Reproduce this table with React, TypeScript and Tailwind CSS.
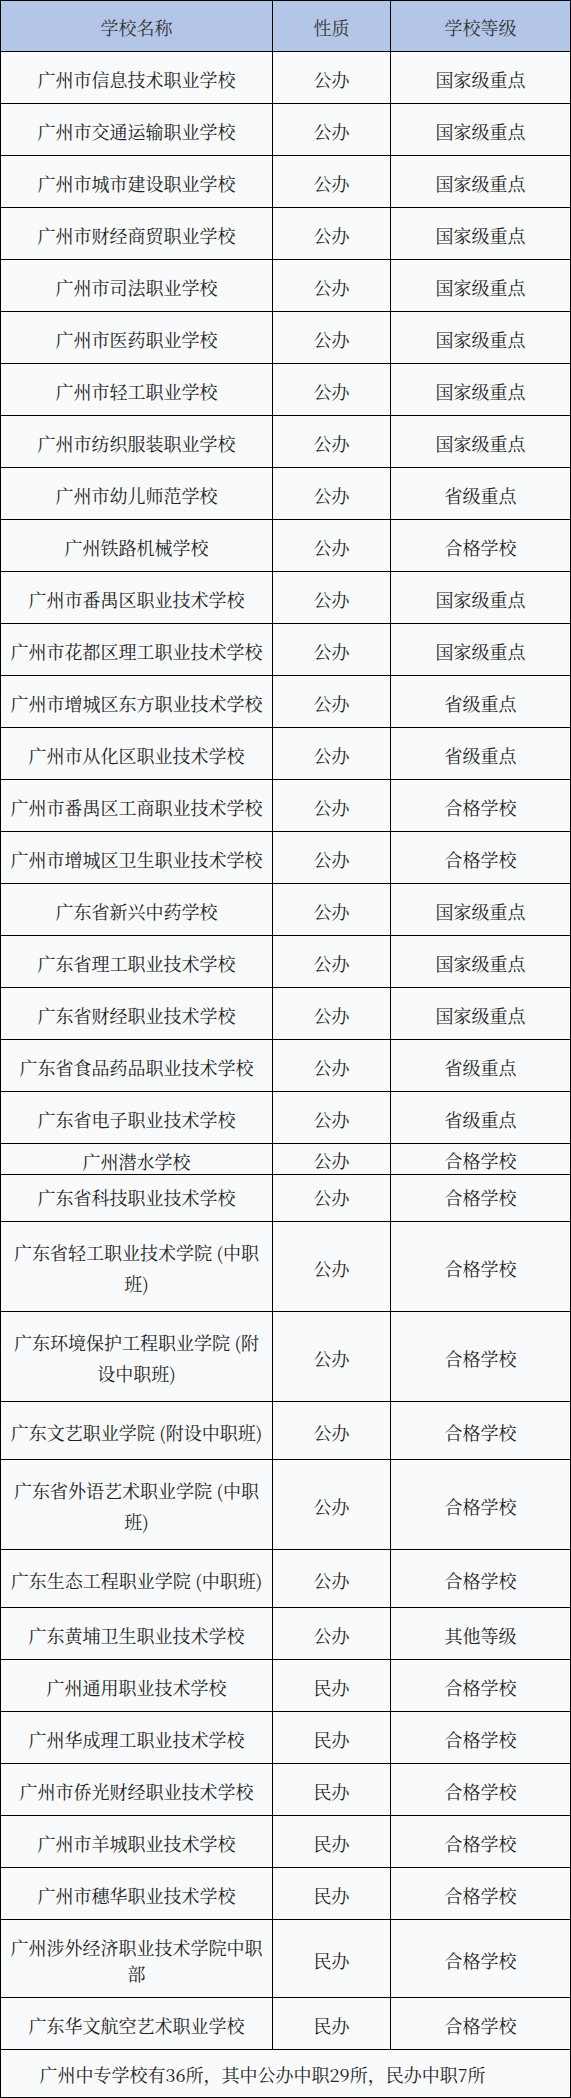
import React from "react";

type Row = { name: string[]; type: string; level: string; h: string; lead?: string };

const rows: Row[] = [
  { name: ["广州市信息技术职业学校"], type: "公办", level: "国家级重点", h: "h-[52px]" },
  { name: ["广州市交通运输职业学校"], type: "公办", level: "国家级重点", h: "h-[52px]" },
  { name: ["广州市城市建设职业学校"], type: "公办", level: "国家级重点", h: "h-[52px]" },
  { name: ["广州市财经商贸职业学校"], type: "公办", level: "国家级重点", h: "h-[52px]" },
  { name: ["广州市司法职业学校"], type: "公办", level: "国家级重点", h: "h-[52px]" },
  { name: ["广州市医药职业学校"], type: "公办", level: "国家级重点", h: "h-[52px]" },
  { name: ["广州市轻工职业学校"], type: "公办", level: "国家级重点", h: "h-[52px]" },
  { name: ["广州市纺织服装职业学校"], type: "公办", level: "国家级重点", h: "h-[52px]" },
  { name: ["广州市幼儿师范学校"], type: "公办", level: "省级重点", h: "h-[52px]" },
  { name: ["广州铁路机械学校"], type: "公办", level: "合格学校", h: "h-[52px]" },
  { name: ["广州市番禺区职业技术学校"], type: "公办", level: "国家级重点", h: "h-[52px]" },
  { name: ["广州市花都区理工职业技术学校"], type: "公办", level: "国家级重点", h: "h-[52px]" },
  { name: ["广州市增城区东方职业技术学校"], type: "公办", level: "省级重点", h: "h-[52px]" },
  { name: ["广州市从化区职业技术学校"], type: "公办", level: "省级重点", h: "h-[52px]" },
  { name: ["广州市番禺区工商职业技术学校"], type: "公办", level: "合格学校", h: "h-[52px]" },
  { name: ["广州市增城区卫生职业技术学校"], type: "公办", level: "合格学校", h: "h-[52px]" },
  { name: ["广东省新兴中药学校"], type: "公办", level: "国家级重点", h: "h-[52px]" },
  { name: ["广东省理工职业技术学校"], type: "公办", level: "国家级重点", h: "h-[52px]" },
  { name: ["广东省财经职业技术学校"], type: "公办", level: "国家级重点", h: "h-[52px]" },
  { name: ["广东省食品药品职业技术学校"], type: "公办", level: "省级重点", h: "h-[52px]" },
  { name: ["广东省电子职业技术学校"], type: "公办", level: "省级重点", h: "h-[52px]" },
  { name: ["广州潜水学校"], type: "公办", level: "合格学校", h: "h-[26px]" },
  { name: ["广东省科技职业技术学校"], type: "公办", level: "合格学校", h: "h-[52px]" },
  { name: ["广东省轻工职业技术学院 (中职", "班)"], type: "公办", level: "合格学校", h: "h-[90px]", lead: "leading-[31px]" },
  { name: ["广东环境保护工程职业学院 (附", "设中职班)"], type: "公办", level: "合格学校", h: "h-[90px]", lead: "leading-[31px]" },
  { name: ["广东文艺职业学院 (附设中职班)"], type: "公办", level: "合格学校", h: "h-[58px]" },
  { name: ["广东省外语艺术职业学院 (中职", "班)"], type: "公办", level: "合格学校", h: "h-[90px]", lead: "leading-[31px]" },
  { name: ["广东生态工程职业学院 (中职班)"], type: "公办", level: "合格学校", h: "h-[58px]" },
  { name: ["广东黄埔卫生职业技术学校"], type: "公办", level: "其他等级", h: "h-[52px]" },
  { name: ["广州通用职业技术学校"], type: "民办", level: "合格学校", h: "h-[52px]" },
  { name: ["广州华成理工职业技术学校"], type: "民办", level: "合格学校", h: "h-[52px]" },
  { name: ["广州市侨光财经职业技术学校"], type: "民办", level: "合格学校", h: "h-[52px]" },
  { name: ["广州市羊城职业技术学校"], type: "民办", level: "合格学校", h: "h-[52px]" },
  { name: ["广州市穗华职业技术学校"], type: "民办", level: "合格学校", h: "h-[52px]" },
  { name: ["广州涉外经济职业技术学院中职", "部"], type: "民办", level: "合格学校", h: "h-[78px]", lead: "leading-[26px]" },
  { name: ["广东华文航空艺术职业学校"], type: "民办", level: "合格学校", h: "h-[52px]" },
];

const font = {
  fontFamily: '"Noto Serif CJK SC", "Liberation Sans", "Noto Sans CJK SC", sans-serif',
};

export default function App() {
  return (
    <div className="w-[571px] bg-white text-[18px] text-[#222]" style={font}>
      <div className="border-l border-t border-black">
        <div className="grid grid-cols-[272px_118px_180px] h-[51px] bg-[#b4c6e7] text-[#333]">
          <div className="border-r border-b border-black flex items-center justify-center pt-[3px]">学校名称</div>
          <div className="border-r border-b border-black flex items-center justify-center pt-[3px]">性质</div>
          <div className="border-r border-b border-black flex items-center justify-center pt-[3px]">学校等级</div>
        </div>
        {rows.map((r, i) => (
          <div key={i} className={`grid grid-cols-[272px_118px_180px] bg-[#f9fafc] ${r.h}`}>
            <div className={`border-r border-b border-black flex flex-col items-center justify-center text-center pt-[3px] ${r.lead ?? "leading-[26px]"}`}>
              {r.name.map((l, j) => (
                <span key={j} className="whitespace-nowrap">{l}</span>
              ))}
            </div>
            <div className="border-r border-b border-black flex items-center justify-center pt-[3px]">{r.type}</div>
            <div className="border-r border-b border-black flex items-center justify-center pt-[3px]">{r.level}</div>
          </div>
        ))}
        <div className="h-[48px] bg-[#f9fafc] border-r border-b border-black flex items-center justify-center pr-[46px] pt-[2px]">
          广州中专学校有36所，其中公办中职29所，民办中职7所
        </div>
      </div>
    </div>
  );
}
